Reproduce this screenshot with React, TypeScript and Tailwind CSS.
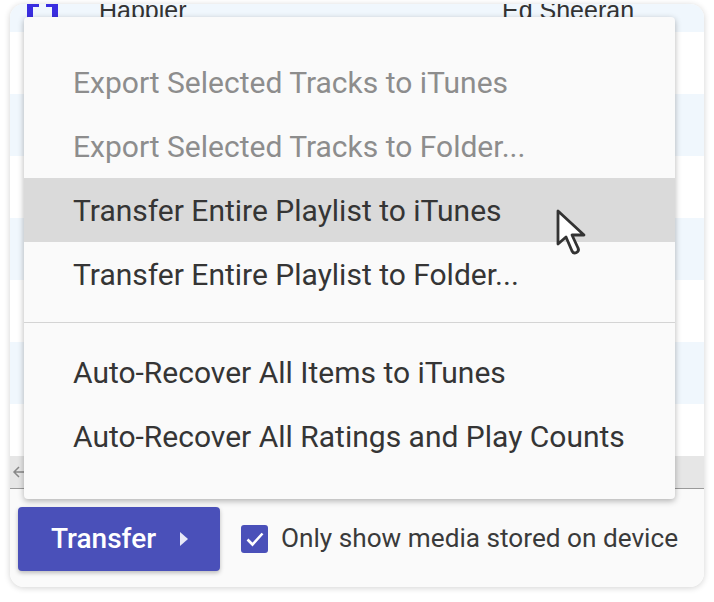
import React from "react";

const Row = ({ blue, h }: { blue: boolean; h: string }) => (
  <div className={`${h} ${blue ? "bg-[#f0f7fd]" : "bg-white"}`} />
);

export default function App() {
  return (
    <div
      className="relative w-[714px] h-[602px] bg-white overflow-hidden"
      style={{ fontFamily: "Roboto, 'Liberation Sans', sans-serif" }}
    >
      {/* card */}
      <div className="mx-[10px] mt-[4px] h-[583px] rounded-[14px] bg-white shadow-[0_1px_6px_rgba(0,0,0,0.18)] overflow-hidden flex flex-col">
        <div className="flex-1 flex flex-col">
          <div className="h-[28px] bg-[#f0f7fd] relative">
            <div className="absolute left-[17px] top-[-3px] w-[31px] h-[17px]">
              <svg width="31" height="17" viewBox="0 0 31 17">
                <path d="M0 0h12v6H6v11H0z" fill="#3a2ee0" />
                <path d="M31 0H19v6h6v11h6z" fill="#3a2ee0" />
              </svg>
            </div>
            <div
              className="absolute left-[89px] top-[-9px] text-[25px] leading-[30px] text-[#333]"
              style={{ fontFamily: "'Liberation Sans', Arial, sans-serif" }}
            >
              Happier
            </div>
            <div
              className="absolute left-[492px] top-[-9px] text-[25px] leading-[30px] text-[#333]"
              style={{ fontFamily: "'Liberation Sans', Arial, sans-serif" }}
            >
              Ed Sheeran
            </div>
          </div>
          <Row blue={false} h="h-[62px]" />
          <Row blue h="h-[62px]" />
          <Row blue={false} h="h-[62px]" />
          <Row blue h="h-[62px]" />
          <Row blue={false} h="h-[62px]" />
          <Row blue h="h-[62px]" />
          <div className="flex-1 bg-white" />
          <div className="h-[32px] bg-[#e6e6e6] flex items-center pl-[2px]">
            <svg width="14" height="14" viewBox="0 0 14 14">
              <path d="M12 7H2M7 2L2 7l5 5" stroke="#888" strokeWidth="1.5" fill="none" />
            </svg>
          </div>
        </div>
        <div className="h-px bg-[#9a9a9a]" />
        <div className="h-[98px] bg-[#fafafa] flex items-start pt-[18px] pl-[8px]">
          <button className="w-[202px] h-[64px] rounded-[4px] bg-[#4a50b9] shadow-[0_2px_4px_rgba(0,0,0,0.25)] flex items-center pl-[33px] text-white text-[28px] font-medium">
            <span>Transfer</span>
            <svg className="ml-[23px]" width="10" height="16" viewBox="0 0 10 16">
              <path d="M1 1l8 7-8 7z" fill="#e8e9f7" />
            </svg>
          </button>
          <div className="flex items-center ml-[21px] h-[64px]">
            <div className="w-[27px] h-[28px] rounded-[3px] bg-[#4a50b9] flex items-center justify-center">
              <svg width="20" height="18" viewBox="0 0 20 18">
                <path d="M2.5 9.5l5 5L17.5 3.5" stroke="white" strokeWidth="2.6" fill="none" />
              </svg>
            </div>
            <span className="ml-[13px] text-[26.2px] text-[#3a3a3a]">
              Only show media stored on device
            </span>
          </div>
        </div>
      </div>

      {/* menu overlay */}
      <div className="absolute left-[24px] top-[17px] w-[651px] h-[482px] rounded-[4px] bg-[#fafafa] shadow-[0_2px_6px_rgba(0,0,0,0.3)] pt-[33px] text-[30px]">
        {[
          { t: "Export Selected Tracks to iTunes", d: true },
          { t: "Export Selected Tracks to Folder...", d: true },
          { t: "Transfer Entire Playlist to iTunes", hl: true },
          { t: "Transfer Entire Playlist to Folder..." },
        ].map((it, i) => (
          <div
            key={i}
            className={`h-[64px] flex items-center pl-[49px] ${it.hl ? "bg-[#dadada]" : ""} ${
              it.d ? "text-[#8d8d8d]" : "text-[#353535]"
            }`}
          >
            {it.t}
          </div>
        ))}
        <div className="h-px bg-[#d4d4d4] mt-[16px] mb-[17px]" />
        {["Auto-Recover All Items to iTunes", "Auto-Recover All Ratings and Play Counts"].map((t, i) => (
          <div key={i} className="h-[64px] flex items-center pl-[49px] text-[#353535]">
            {t}
          </div>
        ))}
      </div>

      {/* cursor */}
      <svg className="absolute left-[555px] top-[208px]" width="36" height="50" viewBox="0 0 36 50">
        <path
          d="M3 3 L3 36 L11 29 L17 43 Q18.5 46 21.5 44.5 Q24.5 43 23 40 L17 27 L29 27 Z"
          fill="white"
          stroke="#333"
          strokeWidth="2.8"
          strokeLinejoin="round"
        />
      </svg>
    </div>
  );
}
